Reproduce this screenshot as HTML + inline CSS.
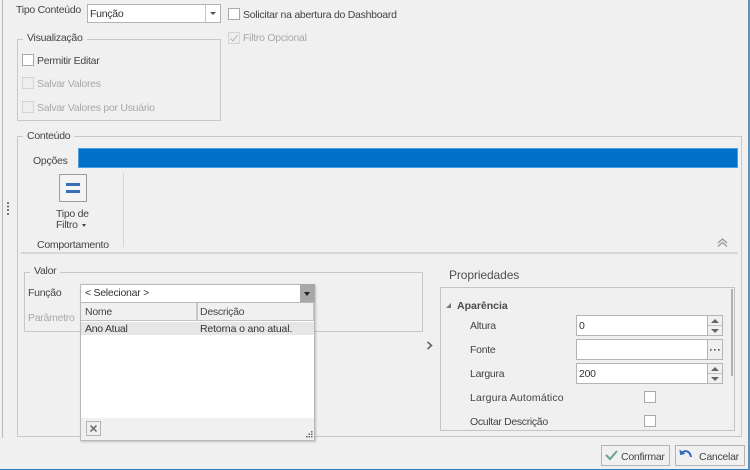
<!DOCTYPE html>
<html>
<head>
<meta charset="utf-8">
<style>
html,body{margin:0;padding:0;background:#f0f0f0}
body{position:relative;width:750px;height:470px;overflow:hidden;font-family:"Liberation Sans",sans-serif;font-size:10.5px;color:#444;letter-spacing:-.27px;filter:blur(.35px)}
div,span{position:absolute;box-sizing:border-box}
.t{white-space:nowrap;line-height:14px}
.dis{color:#a8a8a8}
.cb{width:12px;height:12px;background:#fff;border:1px solid #a9a9a9}
.cbd{width:12px;height:12px;background:#eee;border:1px solid #d4d4d4}
.gb{border:1px solid #c8c8c8}
.lg{background:#f0f0f0;padding:0 4px;white-space:nowrap;line-height:14px}
.inp{background:#fff;border:1px solid #b4b4b4}
.spin{background:#f0f0f0;border:1px solid #b4b4b4}
</style>
</head>
<body>
<!-- window frame -->
<div style="left:2px;top:0;width:1px;height:438px;background:#b8b8b8"></div>
<div style="left:0;top:469px;width:750px;height:1px;background:#2f7fbf"></div>
<div style="left:748px;top:0;width:2px;height:470px;background:#5f93bd"></div>

<!-- Tipo Conteudo -->
<div class="t" style="left:16px;top:3px">Tipo Conteúdo</div>
<div class="inp" style="left:87px;top:4px;width:134px;height:19px"></div>
<div class="t" style="left:90px;top:7px;color:#333">Função</div>
<div style="left:205px;top:5px;width:1px;height:17px;background:#c4c4c4"></div>
<div style="left:210px;top:12px;width:0;height:0;border-left:3px solid transparent;border-right:3px solid transparent;border-top:3px solid #555"></div>
<div class="cb" style="left:228px;top:8px"></div>
<div class="t" style="left:243px;top:8px">Solicitar na abertura do Dashboard</div>
<div class="cbd" style="left:228px;top:32px"></div>
<svg style="position:absolute;left:228px;top:32px" width="12" height="12"><path d="M2.5 6.5L5 9L9.5 3" fill="none" stroke="#b5b5b5" stroke-width="1"/></svg>
<div class="t dis" style="left:243px;top:31px">Filtro Opcional</div>

<!-- Visualizacao -->
<div class="gb" style="left:17px;top:39px;width:204px;height:82px"></div>
<div class="lg" style="left:23px;top:31px">Visualização</div>
<div class="cb" style="left:22px;top:54px"></div>
<div class="t" style="left:37px;top:54px">Permitir Editar</div>
<div class="cbd" style="left:22px;top:77px"></div>
<div class="t dis" style="left:37px;top:77px">Salvar Valores</div>
<div class="cbd" style="left:22px;top:101px"></div>
<div class="t dis" style="left:37px;top:101px">Salvar Valores por Usuário</div>

<!-- splitter dots -->
<div style="left:7px;top:202px;width:2px;height:13px;background:repeating-linear-gradient(#777 0 2px,transparent 2px 3.6px)"></div>

<!-- Conteudo -->
<div class="gb" style="left:17px;top:136px;width:725px;height:301px"></div>
<div class="lg" style="left:23px;top:129px">Conteúdo</div>
<div class="t" style="left:33px;top:154px">Opções</div>
<div style="left:78px;top:148px;width:660px;height:20px;background:#0070c8;border:1px solid #4aa0e0"></div>

<div style="left:59px;top:174px;width:28px;height:28px;border:1px solid #9c9c9c;background:#f4f4f4"></div>
<div style="left:66px;top:183px;width:14px;height:3px;background:#3a6db5"></div>
<div style="left:66px;top:190px;width:14px;height:3px;background:#3a6db5"></div>
<div class="t" style="left:56px;top:207px">Tipo de</div>
<div class="t" style="left:56px;top:218px">Filtro</div>
<div style="left:82px;top:224px;width:0;height:0;border-left:2.5px solid transparent;border-right:2.5px solid transparent;border-top:3px solid #444"></div>
<div class="t" style="left:37px;top:238px">Comportamento</div>
<div style="left:123px;top:173px;width:1px;height:74px;background:#d6d6d6"></div>
<div style="left:21px;top:252px;width:717px;height:2px;background:#d8d8d8"></div>
<svg style="position:absolute;left:716px;top:237px" width="13" height="11"><path d="M2 6L6.5 2L11 6M2 9.5L6.5 5.5L11 9.5" fill="none" stroke="#999" stroke-width="1.3"/></svg>

<!-- Valor -->
<div class="gb" style="left:24px;top:272px;width:399px;height:60px"></div>
<div class="lg" style="left:30px;top:264px">Valor</div>
<div class="t" style="left:28px;top:286px">Função</div>
<div class="t dis" style="left:28px;top:311px">Parâmetro</div>

<!-- Dropdown -->
<div style="left:80px;top:284px;width:235px;height:157px;background:#fff;border:1px solid #b8b8b8;box-shadow:1px 1px 2px rgba(0,0,0,.2)"></div>
<div style="left:81px;top:285px;width:219px;height:17px;background:#fff"></div>
<div class="t" style="left:85px;top:286px;color:#333">&lt; Selecionar &gt;</div>
<div style="left:300px;top:284px;width:15px;height:18px;background:#a8a8a8"></div>
<div style="left:304px;top:292px;width:0;height:0;border-left:3.5px solid transparent;border-right:3.5px solid transparent;border-top:4px solid #222"></div>
<div style="left:81px;top:302px;width:233px;height:1px;background:#b8b8b8"></div>
<div style="left:81px;top:303px;width:233px;height:18px;background:#f0f0f0;border-bottom:1px solid #c0c0c0"></div>
<div style="left:196px;top:303px;width:2px;height:18px;background:#c8c8c8"></div>
<div style="left:313px;top:303px;width:1px;height:18px;background:#c8c8c8"></div>
<div class="t" style="left:85px;top:305px;color:#444">Nome</div>
<div class="t" style="left:200px;top:305px;color:#444">Descrição</div>
<div style="left:81px;top:322px;width:233px;height:13px;background:#e6e6e6"></div>
<div class="t" style="left:85px;top:322px;color:#333">Ano Atual</div>
<div class="t" style="left:200px;top:322px;color:#333;letter-spacing:-.15px">Retorna o ano atual.</div>
<div style="left:81px;top:418px;width:233px;height:22px;background:#f0f0f0"></div>
<div style="left:86px;top:421px;width:15px;height:15px;border:1px solid #b4b4b4;background:#f0f0f0"></div>
<svg style="position:absolute;left:86px;top:421px" width="15" height="15"><path d="M4.5 4.5L10.5 10.5M10.5 4.5L4.5 10.5" stroke="#666" stroke-width="1.5" fill="none"/></svg>
<svg style="position:absolute;left:305px;top:431px" width="9" height="9" fill="#666"><rect x="6" y="0" width="1.5" height="1.5"/><rect x="3.5" y="2.5" width="1.5" height="1.5"/><rect x="6" y="2.5" width="1.5" height="1.5"/><rect x="1" y="5" width="1.5" height="1.5"/><rect x="3.5" y="5" width="1.5" height="1.5"/><rect x="6" y="5" width="1.5" height="1.5"/></svg>

<!-- collapse arrow -->
<svg style="position:absolute;left:426px;top:341px" width="8" height="9"><path d="M1.5 1L5.5 4.5L1.5 8" fill="none" stroke="#666" stroke-width="1.6"/></svg>

<!-- Propriedades -->
<div class="t" style="left:449px;top:268px;font-size:12px;color:#505050;letter-spacing:-.1px">Propriedades</div>
<div style="left:440px;top:287px;width:295px;height:144px;border:1px solid #c4c4c4;background:#f0f0f0"></div>
<div style="left:731px;top:289px;width:2px;height:87px;background:#b0b0b0"></div>
<div style="left:446px;top:303px;width:0;height:0;border-bottom:5px solid #777;border-left:5px solid transparent"></div>
<div class="t" style="left:457px;top:299px;font-weight:bold;color:#4a4a4a;letter-spacing:0">Aparência</div>

<div class="t" style="left:470px;top:319px">Altura</div>
<div class="inp" style="left:576px;top:315px;width:132px;height:21px"></div>
<div class="t" style="left:579px;top:319px;color:#333">0</div>
<div class="spin" style="left:707px;top:315px;width:16px;height:21px"></div>
<div style="left:708px;top:325px;width:14px;height:1px;background:#c4c4c4"></div>
<div style="left:711px;top:319px;width:0;height:0;border-left:4px solid transparent;border-right:4px solid transparent;border-bottom:4px solid #666"></div>
<div style="left:711px;top:329px;width:0;height:0;border-left:4px solid transparent;border-right:4px solid transparent;border-top:4px solid #666"></div>

<div class="t" style="left:470px;top:343px">Fonte</div>
<div class="inp" style="left:576px;top:339px;width:132px;height:21px"></div>
<div class="spin" style="left:707px;top:339px;width:16px;height:21px"></div>
<svg style="position:absolute;left:708px;top:348px" width="14" height="4" fill="#555"><rect x="2" y="1" width="1.6" height="1.6"/><rect x="6" y="1" width="1.6" height="1.6"/><rect x="10" y="1" width="1.6" height="1.6"/></svg>

<div class="t" style="left:470px;top:367px">Largura</div>
<div class="inp" style="left:576px;top:363px;width:132px;height:21px"></div>
<div class="t" style="left:579px;top:367px;color:#333">200</div>
<div class="spin" style="left:707px;top:363px;width:16px;height:21px"></div>
<div style="left:708px;top:373px;width:14px;height:1px;background:#c4c4c4"></div>
<div style="left:711px;top:367px;width:0;height:0;border-left:4px solid transparent;border-right:4px solid transparent;border-bottom:4px solid #666"></div>
<div style="left:711px;top:377px;width:0;height:0;border-left:4px solid transparent;border-right:4px solid transparent;border-top:4px solid #666"></div>

<div class="t" style="left:470px;top:391px;letter-spacing:.15px">Largura Automático</div>
<div class="cb" style="left:644px;top:391px"></div>
<div class="t" style="left:470px;top:415px;letter-spacing:-.33px">Ocultar Descrição</div>
<div class="cb" style="left:644px;top:415px"></div>

<!-- Buttons -->
<div style="left:601px;top:445px;width:69px;height:21px;border:1px solid #b4b4b4;background:#f0f0f0"></div>
<svg style="position:absolute;left:604px;top:448px" width="15" height="14"><path d="M2 7L6 11L13 3" fill="none" stroke="#6aa588" stroke-width="2"/></svg>
<div class="t" style="left:621px;top:450px">Confirmar</div>
<div style="left:675px;top:445px;width:70px;height:21px;border:1px solid #b4b4b4;background:#f0f0f0"></div>
<svg style="position:absolute;left:678px;top:447px" width="15" height="14"><path d="M4 6C7 2.5 12 4 13 10" fill="none" stroke="#2d6cb8" stroke-width="2"/><path d="M1.5 2.5L2 8L7.5 7Z" fill="#2d6cb8"/></svg>
<div class="t" style="left:699px;top:450px">Cancelar</div>
</body>
</html>
